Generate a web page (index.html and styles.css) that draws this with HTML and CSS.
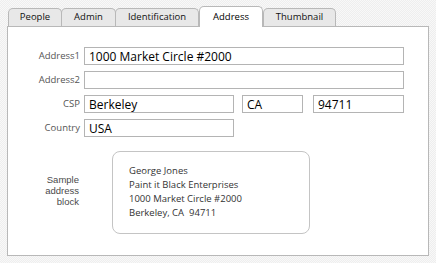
FILE: index.html
```html
<!DOCTYPE html>
<html>
<head>
<meta charset="utf-8">
<title>Address</title>
<link rel="stylesheet" href="styles.css">
</head>
<body>
<div class="window">
  <div class="tabs">
    <div class="tab tab-people">People</div>
    <div class="tab tab-admin">Admin</div>
    <div class="tab tab-ident">Identification</div>
    <div class="tab tab-address active">Address</div>
    <div class="tab tab-thumb">Thumbnail</div>
  </div>
  <div class="panel">
    <div class="form">
      <label class="label">Address1</label>
      <div class="field"><input class="input w-full" type="text" value="1000 Market Circle #2000"></div>

      <label class="label">Address2</label>
      <div class="field"><input class="input w-full" type="text" value=""></div>

      <label class="label">CSP</label>
      <div class="field csp">
        <input class="input w-city" type="text" value="Berkeley">
        <input class="input w-state" type="text" value="CA">
        <input class="input w-zip" type="text" value="94711">
      </div>

      <label class="label">Country</label>
      <div class="field"><input class="input w-city" type="text" value="USA"></div>

      <div class="label sample-label">
        <div class="sample-word">Sample</div>
        <div class="sample-word">address</div>
        <div class="sample-word">block</div>
      </div>
      <div class="sample">
        <div>George Jones</div>
        <div>Paint it Black Enterprises</div>
        <div>1000 Market Circle #2000</div>
        <div>Berkeley, CA&nbsp; 94711</div>
      </div>
    </div>
  </div>
</div>
</body>
</html>
```
FILE: styles.css
```css
html, body {
  margin: 0;
  padding: 0;
}
body {
  width: 436px;
  height: 263px;
  overflow: hidden;
  font-family: "Open Sans", "DejaVu Sans", sans-serif;
  background: repeating-conic-gradient(#eeeeee 0 25%, #f8f8f8 0 50%) 0 0 / 2px 2px;
}
.window {
  padding: 6px 0 0 7px;
}
.tabs {
  display: flex;
  align-items: flex-end;
  padding-left: 1px;
  margin-bottom: -1px;
  position: relative;
  z-index: 1;
  height: 21px;
}
.tab {
  box-sizing: border-box;
  height: 18px;
  margin-bottom: 1px;
  border: 1px solid #b8b8b8;
  border-bottom: none;
  border-radius: 5px 5px 0 0;
  background: #e8e8e8;
  color: #111111;
  font-size: 9.5px;
  line-height: 16px;
  text-align: center;
}
.tab + .tab {
  margin-left: -1px;
}
.tab-people { width: 54px; }
.tab-admin { width: 55px; }
.tab-ident { width: 84px; }
.tab-address { width: 64px; }
.tab-thumb { width: 73px; }
.tab.active {
  height: 21px;
  margin-bottom: 0;
  padding-top: 2px;
  background: #ffffff;
  color: #000000;
  margin-left: 0;
}
.tab.active + .tab {
  margin-left: 0;
}
.panel {
  box-sizing: border-box;
  width: 422px;
  height: 230px;
  border: 1px solid #b8b8b8;
  background: #ffffff;
  padding-top: 20px;
}
.form {
  display: grid;
  grid-template-columns: 72px auto;
  column-gap: 4px;
  row-gap: 6px;
  align-items: center;
}
.label {
  text-align: right;
  font-size: 9.5px;
  color: #555555;
  line-height: 12px;
}
.field {
  display: flex;
  height: 18px;
}
.input {
  box-sizing: border-box;
  height: 18px;
  margin: 0;
  border: 1px solid #b4b4b4;
  border-radius: 0;
  padding: 0 4px;
  font-family: "Open Sans", "DejaVu Sans", sans-serif;
  font-size: 12px;
  color: #000000;
  background: #ffffff;
  outline: none;
}
.w-full { width: 320px; }
.w-city { width: 150px; }
.w-state { width: 61px; margin-left: 8px; }
.w-zip { width: 91px; margin-left: 10px; }
.sample-label {
  margin-top: 4px;
  padding-right: 1px;
  font-family: "Liberation Sans", "Open Sans", sans-serif;
  font-size: 9.5px;
  color: #4a4a4a;
}
.sample-word {
  line-height: 11px;
  height: 11px;
}
.sample {
  box-sizing: border-box;
  margin-top: 8px;
  margin-left: 28px;
  width: 198px;
  height: 83px;
  border: 1px solid #c4c4c4;
  border-radius: 8px;
  padding: 12px 0 0 16px;
  font-size: 9.5px;
  line-height: 14px;
  color: #333333;
}
```
